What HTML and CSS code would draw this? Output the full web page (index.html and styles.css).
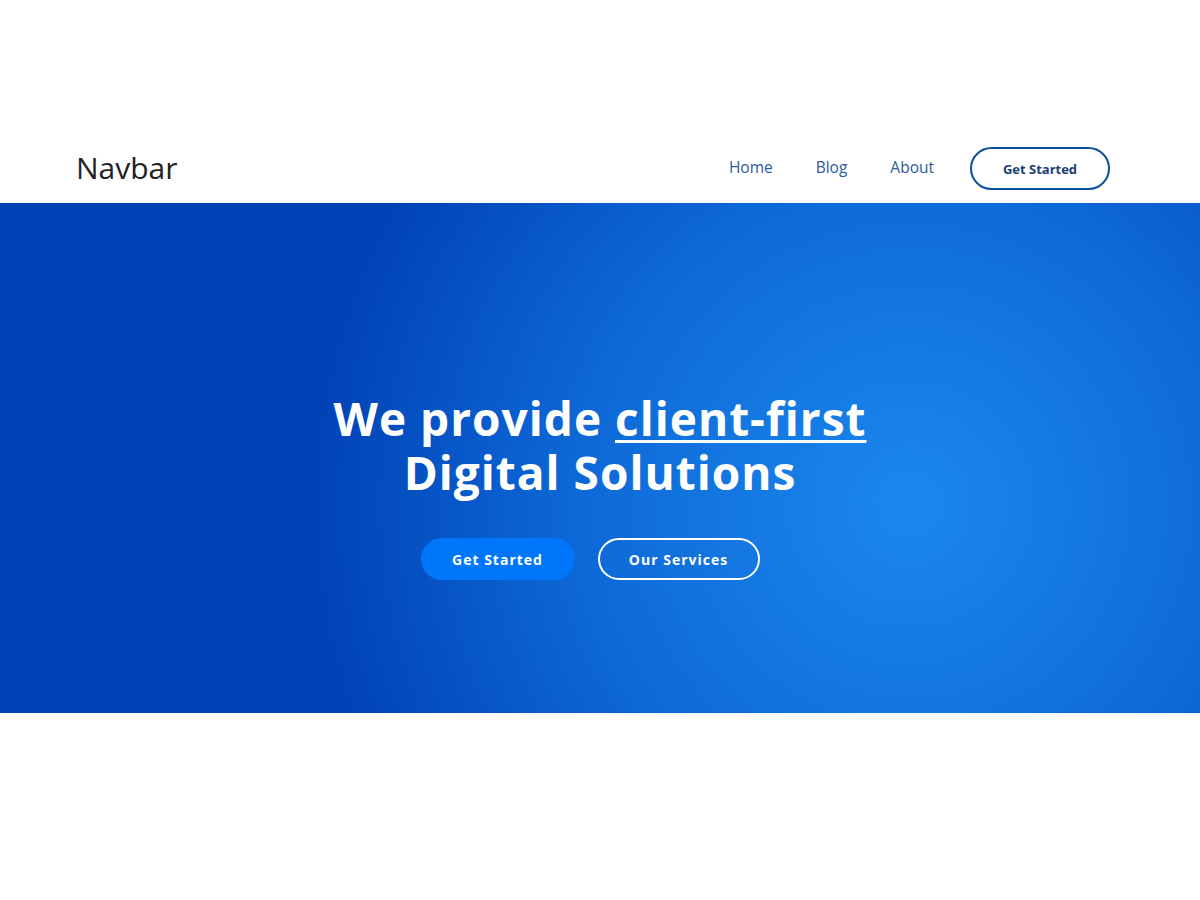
FILE: index.html
```html
<!DOCTYPE html>
<html lang="en">
<head>
<meta charset="utf-8">
<title>Navbar</title>
<link rel="stylesheet" href="styles.css">
</head>
<body>
<header class="site-header">
  <a class="brand" href="#">Navbar</a>
  <nav class="nav">
    <a class="nav-link" href="#">Home</a>
    <a class="nav-link" href="#">Blog</a>
    <a class="nav-link" href="#">About</a>
    <a class="nav-cta" href="#">Get Started</a>
  </nav>
</header>
<section class="hero">
  <h1 class="hero-title">We provide <span class="hl">client-first</span><br>Digital Solutions</h1>
  <div class="hero-actions">
    <a class="btn btn-primary" href="#">Get Started</a>
    <a class="btn btn-outline" href="#">Our Services</a>
  </div>
</section>
<div class="after"></div>
</body>
</html>
```
FILE: styles.css
```css
* { box-sizing: border-box; }
html, body { margin: 0; padding: 0; background: #fff; }
body { font-family: "Open Sans", "Liberation Sans", sans-serif; }
a { text-decoration: none; }

.site-header {
  display: flex;
  align-items: center;
  justify-content: space-between;
  height: 203px;
  padding: 132px 90px 0 76px;
}
.brand {
  font-size: 30px;
  color: #222;
  line-height: 1;
}
.nav {
  display: flex;
  align-items: center;
}
.nav-link {
  font-size: 15.5px;
  color: #2a5b9c;
  margin-right: 43px;
  line-height: 1;
}
.nav-link:nth-child(3) { margin-right: 36px; }
.nav-cta {
  display: flex;
  align-items: center;
  justify-content: center;
  width: 140px;
  height: 43px;
  border: 2px solid #0d4f9e;
  border-radius: 22px;
  color: #183e73;
  font-weight: 700;
  font-size: 13px;
  margin-top: 2px;
}

.hero {
  height: 510px;
  background: radial-gradient(circle at 910px 302px, #1b88ee 0, #0e6ad8 320px, #0041b5 610px);
  display: flex;
  flex-direction: column;
  align-items: center;
  padding-top: 188px;
  color: #fff;
}
.hero-title {
  margin: 0;
  text-align: center;
  font-family: "Open Sans", "Liberation Sans", sans-serif;
  font-weight: 700;
  font-size: 46px;
  line-height: 54px;
  letter-spacing: 1px;
}
.hl {
  text-decoration: underline;
  text-decoration-thickness: 3px;
  text-underline-offset: 4px;
}
.hero-actions {
  display: flex;
  gap: 23px;
  margin-top: 39px;
  margin-right: 20px;
}
.btn {
  display: flex;
  align-items: center;
  justify-content: center;
  height: 42px;
  border-radius: 21px;
  color: #fff;
  font-weight: 700;
  font-size: 14px;
  letter-spacing: 1px;
}
.btn-primary {
  width: 154px;
  background: #0077fa;
}
.btn-outline {
  width: 162px;
  border: 2px solid #fff;
}
.after { height: 187px; }
```
